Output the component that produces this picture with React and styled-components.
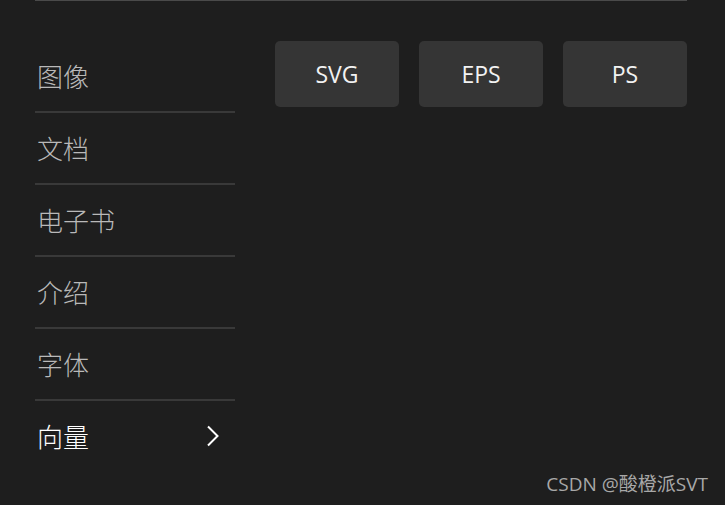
import React from "react";
import styled, { createGlobalStyle } from "styled-components";

const Global = createGlobalStyle`
  html, body { margin: 0; padding: 0; background: #1e1e1e; }
  body { width: 725px; height: 505px; overflow: hidden; }
`;

const Page = styled.div`
  position: relative;
  width: 725px;
  height: 505px;
  background: #1e1e1e;
  box-sizing: border-box;
  padding: 0 38px 0 35px;
  font-family: "Open Sans", "Noto Sans CJK SC", sans-serif;
`;

const TopRule = styled.div`
  height: 1px;
  background: #4a4a4a;
  width: 652px;
`;

const Body = styled.div`
  display: flex;
  gap: 40px;
  margin-top: 40px;
`;

const Sidebar = styled.nav`
  width: 200px;
  display: flex;
  flex-direction: column;
`;

const Item = styled.div`
  height: 70px;
  display: flex;
  align-items: center;
  justify-content: space-between;
  padding: 0 15px 0 2px;
  border-bottom: ${(p) => (p.$last ? "none" : "2px solid #393939")};
  color: ${(p) => (p.$active ? "#ffffff" : "#b9b9b9")};
  font-family: "Noto Sans CJK SC", sans-serif;
  font-weight: 300;
  font-size: 26px;
  line-height: 1;
`;

const Buttons = styled.div`
  display: flex;
  gap: 20px;
  align-items: flex-start;
`;

const Button = styled.button`
  width: 124px;
  height: 66px;
  border: none;
  border-radius: 5px;
  background: #353535;
  color: #f2f2f2;
  font-family: "Open Sans", sans-serif;
  font-weight: 500;
  font-size: 23px;
  padding: 0;
`;

const Watermark = styled.div`
  position: absolute;
  right: 17px;
  bottom: 8px;
  color: #a8a8a8;
  font-family: "Open Sans", "Noto Sans CJK SC", sans-serif;
  font-size: 19px;
`;

const Chevron = () => (
  <svg width="14" height="22" viewBox="0 0 14 22" fill="none">
    <path d="M2 1.5 L11.5 11 L2 20.5" stroke="#ffffff" strokeWidth="2" />
  </svg>
);

const items = ["图像", "文档", "电子书", "介绍", "字体", "向量"];

export default function App() {
  return (
    <>
      <Global />
      <Page>
        <TopRule />
        <Body>
          <Sidebar>
            {items.map((t, i) => {
              const last = i === items.length - 1;
              return (
                <Item key={t} $active={last} $last={last}>
                  <span>{t}</span>
                  {last && <Chevron />}
                </Item>
              );
            })}
          </Sidebar>
          <Buttons>
            <Button>SVG</Button>
            <Button>EPS</Button>
            <Button>PS</Button>
          </Buttons>
        </Body>
        <Watermark>CSDN @酸橙派SVT</Watermark>
      </Page>
    </>
  );
}
